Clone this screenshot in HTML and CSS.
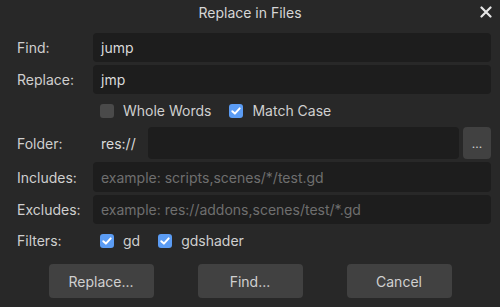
FILE: index.html
```html
<!DOCTYPE html>
<html>
<head>
<meta charset="utf-8">
<link rel="stylesheet" href="styles.css">
</head>
<body>
<div class="dialog">
  <div class="titlebar">
    <span class="title">Replace in Files</span>
    <span class="close"><svg width="12" height="12" viewBox="0 0 12 12"><path d="M1.5 1.5 L10.5 10.5 M10.5 1.5 L1.5 10.5" stroke="#e6e6e6" stroke-width="2.2" stroke-linecap="round"/></svg></span>
  </div>
  <div class="form">
    <div class="label">Find:</div>
    <div class="field">jump</div>
    <div class="label">Replace:</div>
    <div class="field">jmp</div>
    <div></div>
    <div class="checks">
      <span class="check"><span class="box"></span>Whole Words</span>
      <span class="check"><span class="box on"><svg width="14" height="14" viewBox="0 0 14 14"><path d="M3.3 7.2 L5.9 9.6 L10.7 4.4" fill="none" stroke="#fff" stroke-width="2" stroke-linecap="round" stroke-linejoin="round"/></svg></span>Match Case</span>
    </div>
    <div class="label">Folder:</div>
    <div class="folder">
      <span class="prefix">res://</span>
      <div class="field grow"></div>
      <div class="dots">...</div>
    </div>
    <div class="label">Includes:</div>
    <div class="field placeholder">example: scripts,scenes/*/test.gd</div>
    <div class="label">Excludes:</div>
    <div class="field placeholder">example: res://addons,scenes/test/*.gd</div>
    <div class="label">Filters:</div>
    <div class="checks">
      <span class="check"><span class="box on"><svg width="14" height="14" viewBox="0 0 14 14"><path d="M3.3 7.2 L5.9 9.6 L10.7 4.4" fill="none" stroke="#fff" stroke-width="2" stroke-linecap="round" stroke-linejoin="round"/></svg></span>gd</span>
      <span class="check"><span class="box on"><svg width="14" height="14" viewBox="0 0 14 14"><path d="M3.3 7.2 L5.9 9.6 L10.7 4.4" fill="none" stroke="#fff" stroke-width="2" stroke-linecap="round" stroke-linejoin="round"/></svg></span>gdshader</span>
    </div>
  </div>
  <div class="buttons">
    <div class="btn">Replace...</div>
    <div class="btn">Find...</div>
    <div class="btn">Cancel</div>
  </div>
</div>
</body>
</html>
```
FILE: styles.css
```css
html, body {
  margin: 0;
  padding: 0;
  background: #282828;
}
body {
  width: 500px;
  height: 307px;
  overflow: hidden;
  font-family: Inter, "Noto Sans", sans-serif;
  font-size: 14px;
  color: #d0d0d0;
}
.dialog {
  display: flex;
  flex-direction: column;
  height: 307px;
}
.titlebar {
  position: relative;
  height: 25px;
  display: flex;
  align-items: center;
  justify-content: center;
  margin-bottom: 8px;
}
.title {
  color: #d6d6d6;
}
.close {
  position: absolute;
  right: 8px;
  top: 6px;
  width: 12px;
  height: 12px;
  display: flex;
}
.form {
  display: grid;
  grid-template-columns: 76px 1fr;
  grid-template-rows: 29px 29px 27px 32px 30px 29px 27px;
  row-gap: 3px;
  padding: 0 9px 0 17px;
}
.label {
  display: flex;
  align-items: center;
  color: #cfcfcf;
}
.field {
  background: #1d1d1d;
  border-radius: 4px;
  display: flex;
  align-items: center;
  padding-left: 8px;
  color: #dadada;
}
.placeholder {
  color: #6f6f6f;
}
.checks {
  display: flex;
  align-items: center;
  padding-left: 7px;
  gap: 18px;
}
.check {
  display: flex;
  align-items: center;
  gap: 9px;
  color: #cfcfcf;
}
.box {
  width: 14px;
  height: 14px;
  border-radius: 3px;
  background: #4a4a4a;
  display: flex;
}
.box.on {
  background: #5b9cf4;
}
.folder {
  display: flex;
  align-items: stretch;
  gap: 4px;
}
.prefix {
  display: flex;
  align-items: center;
  padding-left: 8px;
  width: 43px;
  color: #dadada;
}
.grow {
  flex: 1;
}
.dots {
  width: 28px;
  background: #414141;
  border-radius: 4px;
  display: flex;
  align-items: center;
  justify-content: center;
  font-size: 12px;
  color: #cfcfcf;
}
.buttons {
  display: flex;
  justify-content: center;
  gap: 44px;
  margin-top: 10px;
}
.btn {
  width: 105px;
  height: 34px;
  border-radius: 4px;
  background: #414141;
  display: flex;
  align-items: center;
  justify-content: center;
  color: #d0d0d0;
}
```
